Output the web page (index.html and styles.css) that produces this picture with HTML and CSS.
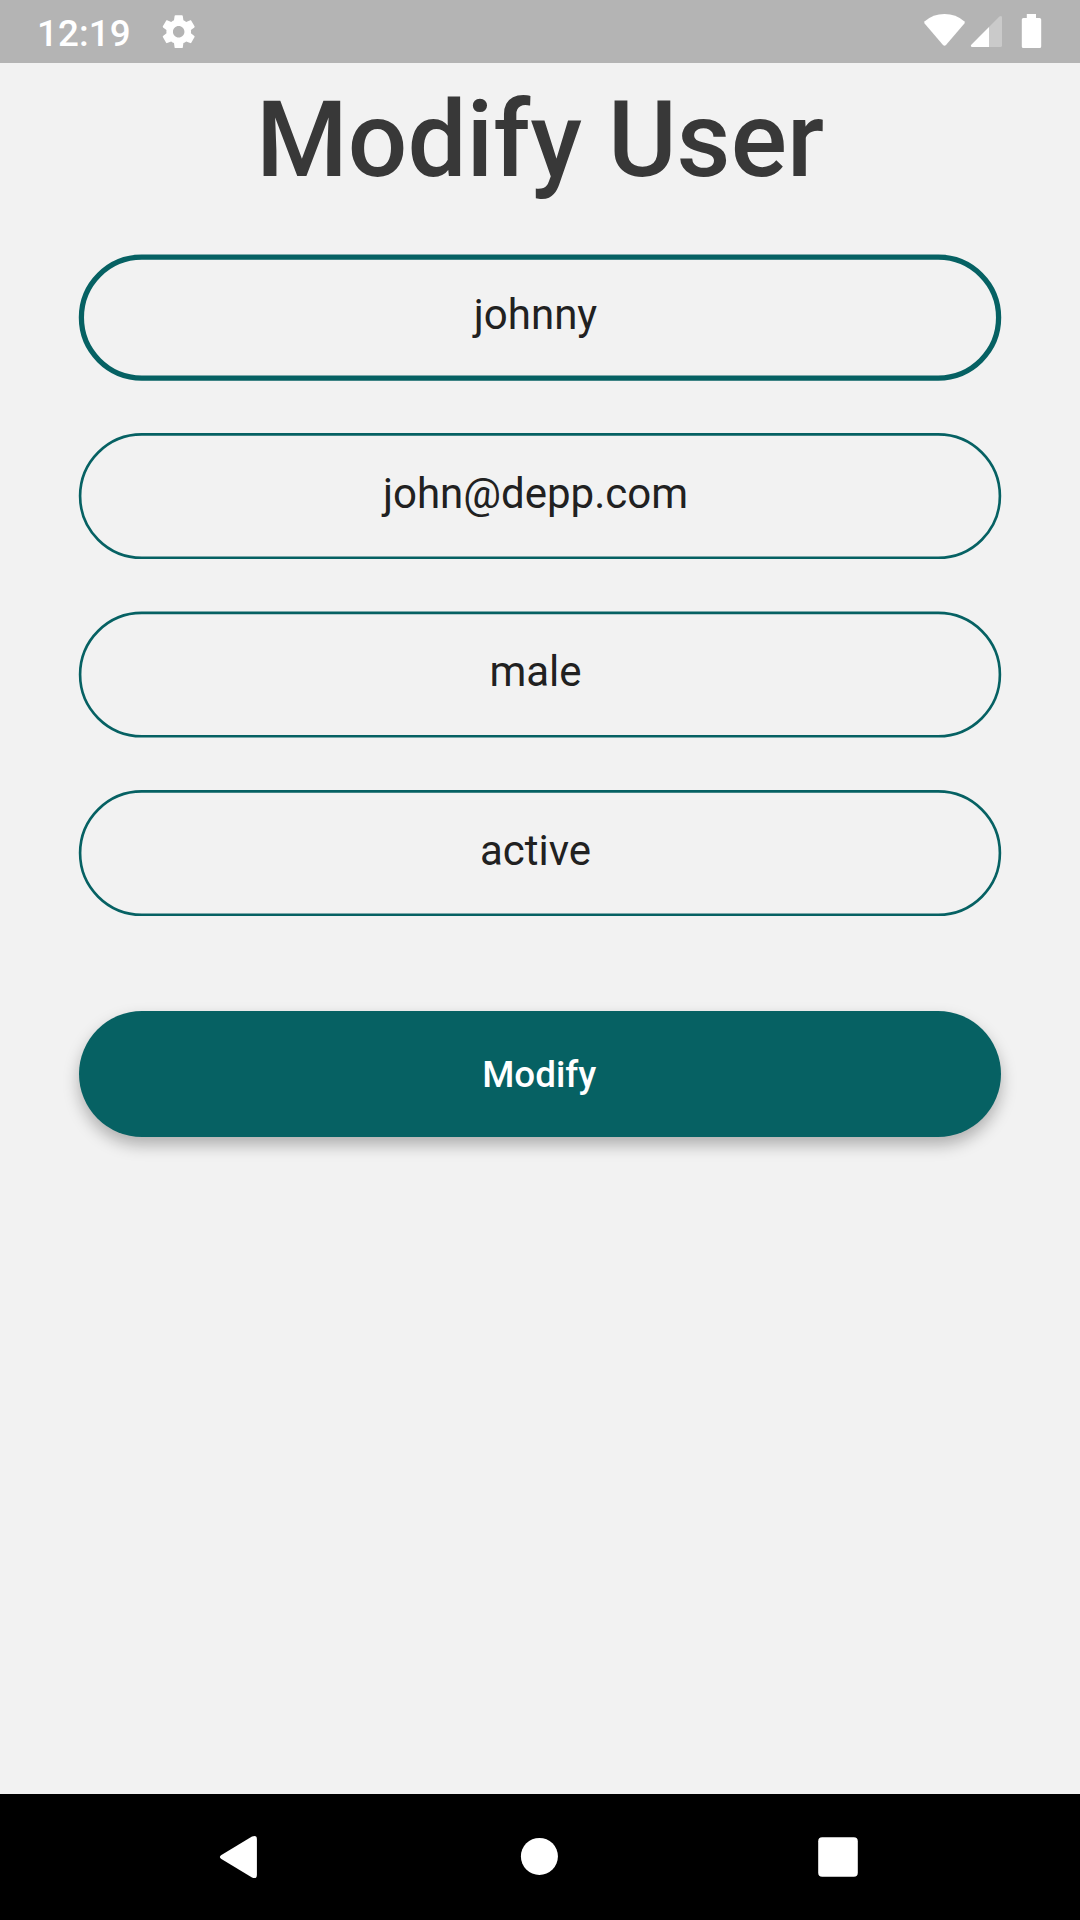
FILE: index.html
```html
<!DOCTYPE html>
<html lang="en">
<head>
<meta charset="utf-8">
<title>Modify User</title>
<link rel="stylesheet" href="styles.css">
</head>
<body>
<div class="screen">
  <header class="status-bar">
    <span class="clock">12:19</span>
    <svg class="gear" viewBox="0 0 24 24"><path d="M19.43 12.98c.04-.32.07-.64.07-.98s-.03-.66-.07-.98l2.11-1.65c.19-.15.24-.42.12-.64l-2-3.46c-.12-.22-.39-.3-.61-.22l-2.49 1c-.52-.4-1.08-.73-1.69-.98l-.38-2.65C14.46 2.18 14.25 2 14 2h-4c-.25 0-.46.18-.49.42l-.38 2.65c-.61.25-1.17.59-1.69.98l-2.49-1c-.23-.09-.49 0-.61.22l-2 3.46c-.13.22-.07.49.12.64l2.11 1.65c-.04.32-.07.65-.07.98s.03.66.07.98l-2.11 1.65c-.19.15-.24.42-.12.64l2 3.46c.12.22.39.3.61.22l2.49-1c.52.4 1.08.73 1.69.98l.38 2.65c.03.24.24.42.49.42h4c.25 0 .46-.18.49-.42l.38-2.65c.61-.25 1.17-.59 1.69-.98l2.49 1c.23.09.49 0 .61-.22l2-3.46c.12-.22.07-.49-.12-.64l-2.11-1.65zM12 15.5c-1.93 0-3.5-1.57-3.5-3.5s1.57-3.5 3.5-3.5 3.5 1.57 3.5 3.5-1.57 3.5-3.5 3.5z"/></svg>
    <svg class="indicators" viewBox="0 0 120 36">
      <path d="M4.8 9.3Q13 2 24.5 2T44.2 9.3Q45.2 10.3 44.4 11.4L26 33Q24.5 34.6 23 33L4.6 11.4Q3.8 10.3 4.8 9.3Z"/>
      <path class="faint" d="M69 15L79.4 4.6Q82 3 82 5.6V33.4Q82 35 80.4 35H69Z"/>
      <path d="M69 15V35H52.2Q50 34.6 51.3 32.7Z"/>
      <path d="M106.8 2H116V6H119.6Q121.2 6 121.2 7.6V34.4Q121.2 36 119.6 36H103.4Q101.8 36 101.8 34.4V7.6Q101.8 6 103.4 6H106.8Z"/>
    </svg>
  </header>
  <main class="content">
    <h1 class="title">Modify User</h1>
    <form class="form">
      <div class="field focused"><svg class="outline"><rect x="3.4" y="3.2" width="917.2" height="120.8" rx="60.4"/></svg><span class="value">johnny</span></div>
      <div class="field"><svg class="outline"><rect x="2.1" y="1.4" width="919.8" height="123.4" rx="61.7"/></svg><span class="value">john@depp.com</span></div>
      <div class="field"><svg class="outline"><rect x="2.1" y="1.9" width="919.8" height="123.4" rx="61.7"/></svg><span class="value">male</span></div>
      <div class="field"><svg class="outline"><rect x="2.1" y="1.4" width="919.8" height="123.4" rx="61.7"/></svg><span class="value">active</span></div>
      <button class="submit" type="button">Modify</button>
    </form>
  </main>
  <nav class="nav-bar">
    <svg class="nav-icon" viewBox="0 0 44 44"><path d="M3.4 19.9L34 1.5Q38.9 -.4 38.9 4V40Q38.9 44.4 34 42.5L3.4 24.1Q.4 22 3.4 19.9Z"/></svg>
    <svg class="nav-icon" viewBox="0 0 44 44"><circle cx="22.4" cy="21.4" r="18.5"/></svg>
    <svg class="nav-icon" viewBox="0 0 44 44"><rect x="2.2" y="2.2" width="39.6" height="39.6" rx="4"/></svg>
  </nav>
</div>
</body>
</html>
```

FILE: styles.css
```css
* { box-sizing: border-box; }
body { margin: 0; font-family: Roboto, sans-serif; }
.screen {
  width: 1080px;
  height: 1920px;
  display: flex;
  flex-direction: column;
  background: #f2f2f2;
}
.status-bar {
  height: 63px;
  padding: 0 40px 0 37px;
  display: flex;
  align-items: center;
  background: #b4b4b4;
  color: #fff;
}
.clock { font-size: 36.75px; font-weight: 500; line-height: 44px; padding-top: 4px; letter-spacing: .1px; }
.gear { width: 39.4px; height: 39.4px; margin-left: 28px; fill: #fff; }
.indicators { width: 120px; height: 36px; margin: -3px 0 0 auto; fill: #fff; overflow: visible; }
.faint { opacity: .3; }
.content { flex: 1; padding: 16px 78px 0; }
.title {
  margin: 0;
  font-size: 105px;
  font-weight: 500;
  line-height: 123px;
  text-align: center;
  white-space: nowrap;
  color: #383838;
}
.form { display: flex; flex-direction: column; margin-top: 52px; gap: 52px; }
.field { height: 126.5px; display: grid; }
.outline { grid-area: 1 / 1; width: 100%; height: 100%; overflow: visible; fill: none; stroke: #066163; stroke-width: 2.625px; }
.focused .outline { stroke-width: 5.25px; }
.value {
  grid-area: 1 / 1;
  padding: 36px 9px 0 0;
  font-size: 42px;
  line-height: 49px;
  text-align: center;
  color: #212121;
}
.submit {
  height: 126px;
  margin: 42.6px .75px 0;
  padding: 1px 1.5px 0 0;
  border: 0;
  border-radius: 63px;
  background: #066163;
  box-shadow: 0 8px 16px rgba(0,0,0,.28);
  color: #fff;
  font: 500 36.75px/43px Roboto, sans-serif;
}
.nav-bar {
  height: 126px;
  padding: 0 220px 0 218px;
  display: flex;
  align-items: center;
  justify-content: space-between;
  background: #000;
}
.nav-icon { width: 44px; height: 44px; fill: #fff; }
```
